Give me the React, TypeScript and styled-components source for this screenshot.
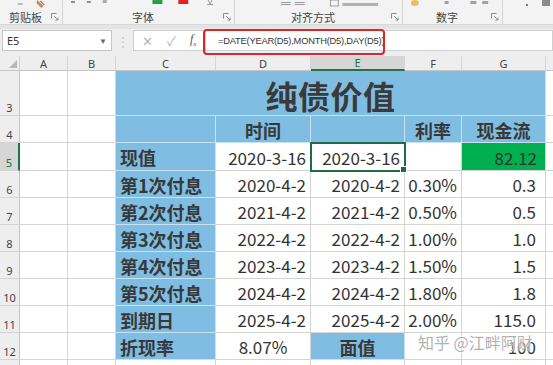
import React from 'react';
import styled, { createGlobalStyle, css } from 'styled-components';

const Global = createGlobalStyle`
  html, body { margin: 0; padding: 0; background: #ffffff; }
  body {
    width: 553px; height: 365px; overflow: hidden;
    font-family: "Noto Sans CJK SC", "Noto Sans", sans-serif;
  }
`;

const Page = styled.div`
  width: 553px;
  height: 365px;
  display: flex;
  flex-direction: column;
  overflow: hidden;
`;

/* ---------------- Ribbon ---------------- */
const Ribbon = styled.div`
  height: 24px;
  display: flex;
  background: #f3f3f3;
  flex-shrink: 0;
`;

const Group = styled.div<{ $w: number; $last?: boolean }>`
  width: ${p => p.$w}px;
  flex-shrink: 0;
  display: flex;
  flex-direction: column;
  box-sizing: border-box;
  border-right: ${p => (p.$last ? 'none' : '1px solid #d6d6d6')};
  ${p => p.$last && css`flex: 1;`}
`;

const GroupTools = styled.div`
  height: 9px;
  overflow: hidden;
  display: flex;
  align-items: flex-end;
`;

const GroupFooter = styled.div`
  flex: 1;
  display: flex;
  align-items: center;
  padding-right: 3px;
  padding-top: 1px;
`;

const GroupLabel = styled.span`
  flex: 1;
  text-align: center;
  font-size: 11px;
  line-height: 12px;
  color: #444;
`;

const Launcher = () => (
  <svg width="8" height="8" viewBox="0 0 8 8">
    <path d="M0.5 0.5h5M0.5 0.5v5" stroke="#8a8a8a" strokeWidth="1" fill="none" />
    <path d="M3 3l4 4M7 4.5V7H4.5" stroke="#8a8a8a" strokeWidth="1" fill="none" />
  </svg>
);

const RibbonStrip = styled.div`
  height: 5px;
  background: #e4e4e4;
  border-top: 1px solid #d8d8d8;
  box-sizing: border-box;
  flex-shrink: 0;
`;

/* ---------------- Formula bar ---------------- */
const FormulaRow = styled.div`
  position: relative;
  height: 27px;
  flex-shrink: 0;
  display: flex;
  align-items: flex-start;
  padding: 1px 0 0 2px;
  box-sizing: border-box;
  background: #eeeeee;
`;

const NameBox = styled.div`
  width: 110px;
  height: 21px;
  box-sizing: border-box;
  border: 1px solid #c6c6c6;
  background: #fff;
  display: flex;
  align-items: center;
  justify-content: space-between;
  padding: 0 4px 0 4px;
  font-family: "Noto Sans", sans-serif;
  font-size: 11px;
  color: #333;
`;

const Caret = styled.span`
  font-size: 8px;
  color: #666;
`;

const Grip = styled.div`
  width: 21px;
  height: 21px;
  display: flex;
  align-items: center;
  justify-content: center;
  color: #c4c4c4;
  font-size: 12px;
`;

const FxBox = styled.div`
  width: 72px;
  height: 21px;
  box-sizing: border-box;
  border: 1px solid #d0d0d0;
  border-right: none;
  background: #fff;
  display: flex;
  align-items: center;
  padding-left: 8px;
  gap: 14px;
  color: #b5b5b5;
  font-size: 13px;
`;

const FxLabel = styled.span`
  font-family: "Liberation Serif", serif;
  font-style: italic;
  color: #555;
  font-size: 12px;
`;

const FxSub = styled.sub`
  font-size: 7px;
`;

const FormulaInput = styled.div`
  flex: 1;
  height: 21px;
  box-sizing: border-box;
  border: 1px solid #d0d0d0;
  background: #fff;
  display: flex;
  align-items: center;
  padding-left: 12px;
  font-family: "Liberation Sans", Arial, sans-serif;
  font-size: 9.3px;
  letter-spacing: -0.2px;
  color: #333;
  white-space: nowrap;
`;

const Highlight = styled.div`
  position: absolute;
  left: 203px;
  top: 0;
  width: 182px;
  height: 26px;
  box-sizing: border-box;
  border: 2px solid #d9262c;
  border-radius: 4px;
  pointer-events: none;
`;

/* ---------------- Sheet ---------------- */
const Sheet = styled.div`
  position: relative;
  display: grid;
  grid-template-columns: 20px 48px 48px 100px 95px 94px 57px 84px 1fr;
  grid-template-rows: 15px 45px 27px 28px repeat(7, 27px) 24px;
  background: #fff;
`;

const Corner = styled.div`
  background: #eeeeee;
  border-right: 1px solid #d0d0d0;
  border-bottom: 1px solid #c6c6c6;
  box-sizing: border-box;
  display: flex;
  align-items: flex-end;
  justify-content: flex-end;
  padding: 0 2px 2px 0;
`;

const ColHead = styled.div<{ $active?: boolean }>`
  box-sizing: border-box;
  background: ${p => (p.$active ? '#d6d6d6' : '#eeeeee')};
  border-right: 1px solid #d5d5d5;
  border-bottom: ${p => (p.$active ? '2px solid #217346' : '1px solid #c6c6c6')};
  display: flex;
  align-items: center;
  justify-content: center;
  font-family: "Noto Sans", sans-serif;
  font-size: 11px;
  color: ${p => (p.$active ? '#217346' : '#444')};
`;

const RowHead = styled.div<{ $active?: boolean }>`
  box-sizing: border-box;
  background: ${p => (p.$active ? '#d6d6d6' : '#eeeeee')};
  border-bottom: 1px solid #d5d5d5;
  border-right: ${p => (p.$active ? '2px solid #217346' : '1px solid #c6c6c6')};
  display: flex;
  align-items: flex-end;
  justify-content: center;
  padding-bottom: 1px;
  font-family: "Noto Sans", sans-serif;
  font-size: 11px;
  line-height: 13px;
  color: ${p => (p.$active ? '#217346' : '#444')};
`;

type Fill = 'blue' | 'green' | 'white';
const fills: Record<Fill, string> = {
  blue: '#7fbee2',
  green: '#00b050',
  white: '#ffffff',
};

const Cell = styled.div<{
  $fill?: Fill;
  $align?: 'left' | 'center' | 'right';
  $bold?: boolean;
  $pr?: number;
  $selected?: boolean;
}>`
  position: relative;
  box-sizing: border-box;
  background: ${p => fills[p.$fill || 'white']};
  border-right: 1px solid ${p => (p.$fill === 'blue' ? '#c8e2f1' : '#d4d4d4')};
  border-bottom: 1px solid ${p => (p.$fill === 'blue' ? '#c8e2f1' : '#d4d4d4')};
  display: flex;
  align-items: center;
  justify-content: ${p =>
    p.$align === 'center' ? 'center' : p.$align === 'right' ? 'flex-end' : 'flex-start'};
  padding: 1px ${p => p.$pr ?? 4}px 0 4px;
  font-size: ${p => (p.$bold ? 18 : 17)}px;
  font-weight: ${p => (p.$bold ? 700 : 400)};
  color: ${p => (p.$bold ? '#383838' : '#333')};
  white-space: nowrap;
  overflow: visible;
  ${p =>
    p.$selected &&
    css`
      outline: 2px solid #1f6b43;
      outline-offset: -1px;
      z-index: 2;
    `}
`;

const TitleCell = styled.div`
  grid-column: span 5;
  box-sizing: border-box;
  background: #7fbee2;
  border-right: 1px solid #c8e2f1;
  border-bottom: 1px solid #c8e2f1;
  display: flex;
  align-items: center;
  justify-content: center;
  padding-top: 4px;
  font-size: 32px;
  font-weight: 700;
  color: #3a3a3a;
  letter-spacing: 0.5px;
`;

const FillHandle = styled.span`
  position: absolute;
  right: -3px;
  bottom: -3px;
  width: 5px;
  height: 5px;
  background: #1f6b43;
  border: 1px solid #fff;
  z-index: 3;
`;

const Watermark = styled.div`
  position: absolute;
  left: 418px;
  top: 274px;
  font-size: 16px;
  color: rgba(150, 150, 150, 0.75);
  text-shadow: 0 0 2px #fff, 0 0 2px #fff;
  white-space: nowrap;
  pointer-events: none;
  z-index: 4;
`;

const ToolIcons = {
  clip: () => (
    <svg width="63" height="9" viewBox="0 0 63 9">
      <rect x="18" y="3" width="5" height="2" fill="#b9b9b9" />
      <path d="M38 0 L44 6 L42 8 L37 3 Z" fill="#c98a4a" />
      <path d="M41 1 L45 5" stroke="#8a8a8a" strokeWidth="1.5" />
    </svg>
  ),
  font: () => (
    <svg width="172" height="9" viewBox="0 0 172 9">
      <rect x="8" y="1" width="4" height="2" fill="#8d8d8d" />
      <rect x="24" y="1" width="4" height="2" fill="#8d8d8d" />
      <rect x="40" y="0" width="4" height="3" fill="#a9a9a9" />
      <rect x="90" y="0" width="10" height="4" fill="#23a04a" />
      <rect x="116" y="0" width="10" height="4" fill="#e02020" />
      <path d="M146 0 L148 4 L150 0" stroke="#9a9a9a" strokeWidth="1" fill="none" />
      <rect x="145" y="4" width="6" height="1" fill="#9a9a9a" />
    </svg>
  ),
  align: () => (
    <svg width="168" height="9" viewBox="0 0 168 9">
      <rect x="46" y="2" width="10" height="1" fill="#9a9a9a" />
      <rect x="46" y="4" width="10" height="1" fill="#9a9a9a" />
      <rect x="60" y="2" width="10" height="1" fill="#9a9a9a" />
      <rect x="60" y="4" width="10" height="1" fill="#9a9a9a" />
      <rect x="96" y="0" width="8" height="6" fill="none" stroke="#9a9a9a" />
      <rect x="108" y="3" width="36" height="3" fill="#b0b0b0" />
    </svg>
  ),
  number: () => (
    <svg width="100" height="9" viewBox="0 0 100 9">
      <ellipse cx="12" cy="3" rx="4" ry="3" fill="#e8c060" />
      <rect x="42" y="1" width="4" height="3" fill="#a0a0a0" />
      <rect x="68" y="1" width="6" height="3" fill="#a0a0a0" />
      <rect x="80" y="1" width="6" height="3" fill="#a0a0a0" />
    </svg>
  ),
  style: () => (
    <svg width="50" height="9" viewBox="0 0 50 9">
      <rect x="23" y="4" width="2" height="2" fill="#777" />
      <rect x="39" y="0" width="8" height="6" fill="#8a8a8a" />
    </svg>
  ),
};

const cols = ['A', 'B', 'C', 'D', 'E', 'F', 'G', ''];

type DataRow = {
  n: number;
  label: string;
  d: string;
  e: string;
  f: string;
  g: string;
};

const payments: DataRow[] = [
  { n: 6, label: '第1次付息', d: '2020-4-2', e: '2020-4-2', f: '0.30%', g: '0.3' },
  { n: 7, label: '第2次付息', d: '2021-4-2', e: '2021-4-2', f: '0.50%', g: '0.5' },
  { n: 8, label: '第3次付息', d: '2022-4-2', e: '2022-4-2', f: '1.00%', g: '1.0' },
  { n: 9, label: '第4次付息', d: '2023-4-2', e: '2023-4-2', f: '1.50%', g: '1.5' },
  { n: 10, label: '第5次付息', d: '2024-4-2', e: '2024-4-2', f: '1.80%', g: '1.8' },
  { n: 11, label: '到期日', d: '2025-4-2', e: '2025-4-2', f: '2.00%', g: '115.0' },
];

const Blank = () => (
  <>
    <Cell />
    <Cell />
  </>
);

export default function App() {
  return (
    <Page>
      <Global />
      <Ribbon>
        <Group $w={63}>
          <GroupTools><ToolIcons.clip /></GroupTools>
          <GroupFooter>
            <GroupLabel>剪贴板</GroupLabel>
            <Launcher />
          </GroupFooter>
        </Group>
        <Group $w={172}>
          <GroupTools><ToolIcons.font /></GroupTools>
          <GroupFooter>
            <GroupLabel>字体</GroupLabel>
            <Launcher />
          </GroupFooter>
        </Group>
        <Group $w={168}>
          <GroupTools><ToolIcons.align /></GroupTools>
          <GroupFooter>
            <GroupLabel>对齐方式</GroupLabel>
            <Launcher />
          </GroupFooter>
        </Group>
        <Group $w={100}>
          <GroupTools><ToolIcons.number /></GroupTools>
          <GroupFooter>
            <GroupLabel>数字</GroupLabel>
            <Launcher />
          </GroupFooter>
        </Group>
        <Group $w={50} $last>
          <GroupTools><ToolIcons.style /></GroupTools>
        </Group>
      </Ribbon>
      <RibbonStrip />

      <FormulaRow>
        <NameBox>
          <span>E5</span>
          <Caret>▼</Caret>
        </NameBox>
        <Grip>⋮</Grip>
        <FxBox>
          <span>✕</span>
          <span>✓</span>
          <FxLabel>f<FxSub>x</FxSub></FxLabel>
        </FxBox>
        <FormulaInput>=DATE(YEAR(D5),MONTH(D5),DAY(D5))</FormulaInput>
        <Highlight />
      </FormulaRow>

      <Sheet>
        <Corner>
          <svg width="8" height="8" viewBox="0 0 8 8">
            <path d="M8 0 L8 8 L0 8 Z" fill="#b8b8b8" />
          </svg>
        </Corner>
        {cols.map((c, i) => (
          <ColHead key={i} $active={c === 'E'}>{c}</ColHead>
        ))}

        {/* row 3 */}
        <RowHead>3</RowHead>
        <Blank />
        <TitleCell>纯债价值</TitleCell>
        <Cell />

        {/* row 4 */}
        <RowHead>4</RowHead>
        <Blank />
        <Cell $fill="blue" />
        <Cell $fill="blue" $bold $align="center">时间</Cell>
        <Cell $fill="blue" />
        <Cell $fill="blue" $bold $align="center">利率</Cell>
        <Cell $fill="blue" $bold $align="center">现金流</Cell>
        <Cell />

        {/* row 5 */}
        <RowHead $active>5</RowHead>
        <Blank />
        <Cell $fill="blue" $bold>现值</Cell>
        <Cell $align="right">2020-3-16</Cell>
        <Cell $align="right" $selected>
          2020-3-16
          <FillHandle />
        </Cell>
        <Cell />
        <Cell $fill="green" $align="right" $pr={8}>82.12</Cell>
        <Cell />

        {payments.map(r => (
          <React.Fragment key={r.n}>
            <RowHead>{r.n}</RowHead>
            <Blank />
            <Cell $fill="blue" $bold>{r.label}</Cell>
            <Cell $align="right">{r.d}</Cell>
            <Cell $align="right">{r.e}</Cell>
            <Cell $align="right">{r.f}</Cell>
            <Cell $align="right" $pr={9}>{r.g}</Cell>
            <Cell />
          </React.Fragment>
        ))}

        {/* row 12 */}
        <RowHead>12</RowHead>
        <Blank />
        <Cell $fill="blue" $bold>折现率</Cell>
        <Cell $align="center">8.07%</Cell>
        <Cell $fill="blue" $bold $align="center">面值</Cell>
        <Cell />
        <Cell $align="right" $pr={9}>100</Cell>
        <Cell />

        {/* row 13 */}
        <RowHead>13</RowHead>
        <Blank />
        <Cell />
        <Cell />
        <Cell />
        <Cell />
        <Cell />
        <Cell />

        <Watermark>知乎 @江畔阿财</Watermark>
      </Sheet>
    </Page>
  );
}
